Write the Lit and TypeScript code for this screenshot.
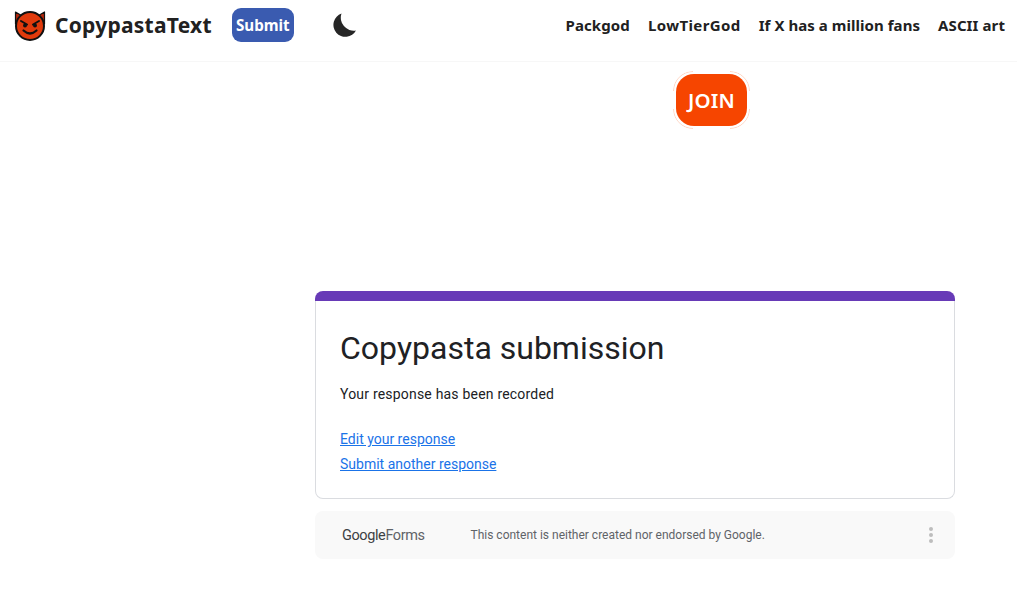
import { LitElement, html, css } from "lit";
import { customElement } from "lit/decorators.js";

@customElement("app-root")
export class AppRoot extends LitElement {
  static styles = css`
    :host { display: block; width: 1017px; height: 597px; overflow: hidden; background: #fff; font-family: "Roboto", sans-serif; color: #202124; }
    header { box-sizing: border-box; border-bottom: 1px solid #f7f7f7; height: 62px; display: flex; align-items: center; padding: 0 12px 11px 14px; }
    .brand { display: flex; align-items: center; gap: 9px; }
    .logo { width: 32px; height: 32px; display: block; }
    .name { font: 700 21px "Noto Sans", sans-serif; color: #212121; letter-spacing: 0.25px; }
    .submit { margin-left: 20px; width: 62px; height: 34px; border-radius: 9px; background: #3a5bb0; color: #fff; font: 700 15.2px "Noto Sans", sans-serif; display: flex; align-items: center; justify-content: center; }
    .moon { margin-left: 37px; width: 26px; height: 26px; display: block; }
    nav { margin-left: auto; display: flex; gap: 18px; }
    nav a { font: 700 15px "Noto Sans", sans-serif; letter-spacing: 0.1px; color: #212121; text-decoration: none; white-space: nowrap; }
    nav a.wide { letter-spacing: 0.4px; }
    nav a.tight { letter-spacing: 0.05px; }
    .join-row { display: flex; padding-left: 673px; padding-top: 9px; height: 220px; box-sizing: border-box; }
    .join-ring { position: relative; width: 77px; height: 58px; padding: 3px; box-sizing: border-box; }
    .join-ring::before {
      content: ""; position: absolute; inset: 0; border: 1px solid #ffd5c2; border-radius: 20px;
      -webkit-mask: linear-gradient(#000, #000) 0 0 / 20px 20px no-repeat, linear-gradient(#000, #000) 100% 0 / 20px 20px no-repeat,
        linear-gradient(#000, #000) 0 100% / 20px 20px no-repeat, linear-gradient(#000, #000) 100% 100% / 20px 20px no-repeat;
      mask: linear-gradient(#000, #000) 0 0 / 20px 20px no-repeat, linear-gradient(#000, #000) 100% 0 / 20px 20px no-repeat,
        linear-gradient(#000, #000) 0 100% / 20px 20px no-repeat, linear-gradient(#000, #000) 100% 100% / 20px 20px no-repeat;
    }
    .join { position: relative; width: 100%; height: 100%; border-radius: 18px; background: #f64500; color: #fff; font: 600 20.5px "Noto Sans", sans-serif; letter-spacing: 0.2px; display: flex; align-items: center; justify-content: center; }
    .col { width: 640px; margin-left: 315px; margin-top: 9px; }
    .bar { height: 10px; background: #673ab7; border-radius: 8px 8px 0 0; }
    .card { box-sizing: border-box; height: 198px; border: 1px solid #dadce0; border-top: none; border-radius: 0 0 8px 8px; padding: 24px 24px 0; }
    h1 { margin: 0; font: 400 32px/46px "Roboto", sans-serif; color: #202124; }
    .rec { margin: 13px 0 0; font: 400 14px/20px "Roboto", sans-serif; letter-spacing: 0.2px; color: #202124; }
    .links { margin-top: 25px; display: flex; flex-direction: column; gap: 5px; align-items: flex-start; }
    .links a { font: 400 14px/20px "Roboto", sans-serif; color: #1a73e8; text-decoration: underline; }
    .foot { margin-top: 12px; height: 48px; border-radius: 8px; background: #f9f9f9; display: flex; align-items: center; padding: 0 22px 0 27px; }
    .gf { width: 128.5px; font: 400 14.5px "Roboto", sans-serif; color: #5f6368; letter-spacing: -0.4px; white-space: nowrap; }
    .gf span { color: #3c4043; }
    .note { font: 400 12px "Roboto", sans-serif; color: #5f6368; }
    .dots { margin-left: auto; display: flex; flex-direction: column; gap: 2px; }
    .dots i { width: 4px; height: 4px; border-radius: 50%; background: #bdbdbd; display: block; }
  `;
  render() {
    return html`
      <header>
        <div class="brand">
          <svg class="logo" viewBox="0 0 32 32">
            <path d="M1.5 3 L10 8 L22 8 L30.5 3 L30.5 15 L1.5 15 Z" fill="#b3260a" stroke="#111" stroke-width="1.2" stroke-linejoin="round"/>
            <circle cx="16" cy="17" r="14" fill="#e03a0c" stroke="#111" stroke-width="2"/>
            <path d="M7 12 L13 15.5 M25 12 L19 15.5" stroke="#111" stroke-width="2" stroke-linecap="round"/>
            <ellipse cx="11" cy="16.5" rx="2" ry="2" fill="#111"/><ellipse cx="21" cy="16.5" rx="2" ry="2" fill="#111"/>
            <path d="M9.5 21.5 Q16 27.5 22.5 21.5" fill="none" stroke="#111" stroke-width="2.2" stroke-linecap="round"/>
          </svg>
          <span class="name">CopypastaText</span>
        </div>
        <div class="submit">Submit</div>
        <svg class="moon" viewBox="0 0 26 26"><path d="M10.5 1.5 A12 12 0 1 0 25 18.5 A13 13 0 0 1 10.5 1.5 Z" fill="#262626"/></svg>
        <nav><a>Packgod</a><a class="wide">LowTierGod</a><a class="tight">If X has a million fans</a><a>ASCII art</a></nav>
      </header>
      <div class="join-row"><div class="join-ring"><div class="join">JOIN</div></div></div>
      <div class="col">
        <div class="bar"></div>
        <div class="card">
          <h1>Copypasta submission</h1>
          <p class="rec">Your response has been recorded</p>
          <div class="links"><a>Edit your response</a><a>Submit another response</a></div>
        </div>
        <div class="foot">
          <span class="gf"><span>Google</span>Forms</span>
          <span class="note">This content is neither created nor endorsed by Google.</span>
          <span class="dots"><i></i><i></i><i></i></span>
        </div>
      </div>
    `;
  }
}
